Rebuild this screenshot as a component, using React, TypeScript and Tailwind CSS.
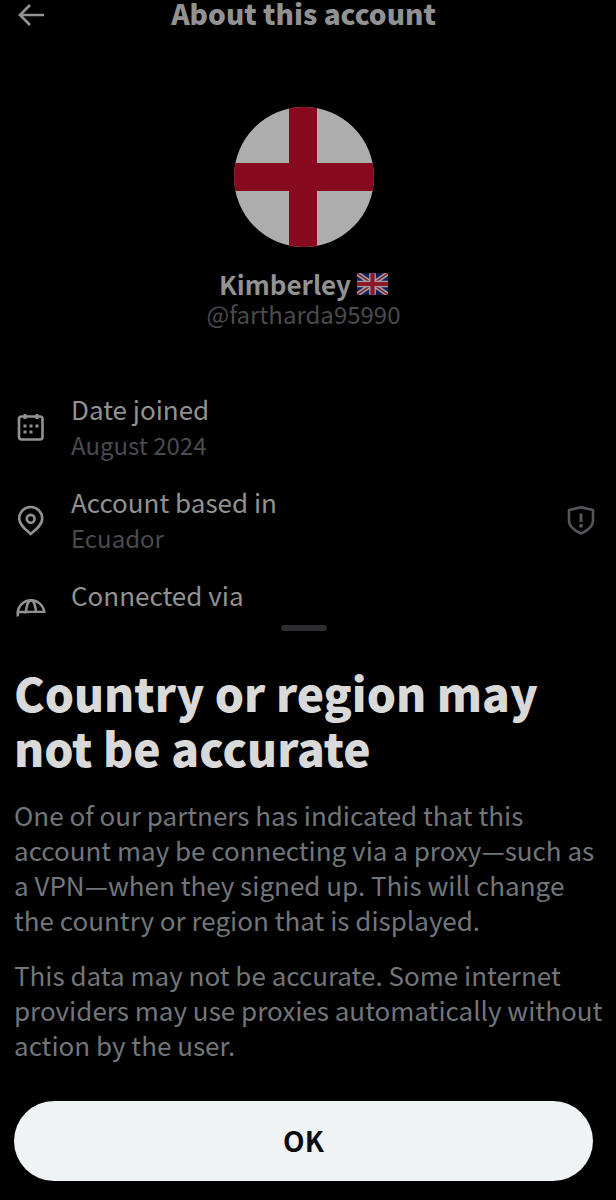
import type { ReactNode } from "react";

type InfoRowProps = {
  icon: ReactNode;
  label: string;
  value?: string;
  action?: ReactNode;
};

function BackIcon() {
  return (
    <svg viewBox="0 0 28 24" className="h-6 w-7" fill="none" stroke="currentColor" strokeWidth="2.7">
      <path d="M13 2 3 12l10 10M3 12h24" />
    </svg>
  );
}

function CalendarIcon() {
  return (
    <svg viewBox="0 0 32 32" className="size-8" fill="none" stroke="currentColor" strokeWidth="2.6">
      <rect x="4" y="5.5" width="23.5" height="23" rx="2.5" />
      <path d="M10 3v5M22 3v5" strokeWidth="3" />
      <path d="M8.5 15h3M14.5 15h3M20.5 15h3M8.5 21h3M14.5 21h3" strokeWidth="3" />
    </svg>
  );
}

function PinIcon() {
  return (
    <svg viewBox="0 0 32 32" className="size-8" fill="none" stroke="currentColor" strokeWidth="2.6">
      <path d="M15.700 30C11 26 4.200 21 4.200 14.500a11.500 11.500 0 0 1 23 0C27.200 21 20.500 26 15.700 30z" />
      <circle cx="15.700" cy="14.800" r="3.900" />
    </svg>
  );
}

function GlobeIcon() {
  return (
    <svg viewBox="0 0 32 32" className="size-8" fill="none" stroke="currentColor" strokeWidth="2.6">
      <circle cx="16" cy="16.500" r="13.300" />
      <ellipse cx="16" cy="16.500" rx="5" ry="13.300" />
      <path d="M3 15h26" />
    </svg>
  );
}

function ShieldIcon() {
  return (
    <svg viewBox="0 0 32 32" className="size-8" fill="none" stroke="currentColor" strokeWidth="2.6">
      <path d="M16 3.200 28 6v11c0 6-5.500 9.500-12 12.500C9.500 26.500 4 23 4 17V6z" strokeLinejoin="round" />
      <path d="M16 9.500v8.500" strokeWidth="3" />
      <circle cx="16" cy="21.800" r="2" fill="currentColor" stroke="none" />
    </svg>
  );
}

function UnionJack() {
  return (
    <svg viewBox="0 0 60 42" className="h-[22px] w-[31px]" role="img" aria-label="United Kingdom">
      <path fill="#101e55" d="M0 0h60v42H0z" />
      <path d="m0 0 60 42M60 0 0 42" stroke="#a0a0a5" strokeWidth="9" />
      <path d="m0 0 60 42M60 0 0 42" stroke="#8d1629" strokeWidth="3" />
      <path d="M30 0v42M0 21h60" stroke="#a0a0a5" strokeWidth="13" />
      <path d="M30 0v42M0 21h60" stroke="#8d1629" strokeWidth="8" />
    </svg>
  );
}

function Avatar() {
  return (
    <svg viewBox="0 0 140 140" className="size-[140px] rounded-full" role="img" aria-label="Profile picture">
      <path fill="#adadad" d="M0 0h140v140H0z" />
      <path d="M69 0v140M0 70h140" stroke="#870a1e" strokeWidth="28" />
    </svg>
  );
}

function InfoRow({ icon, label, value, action }: InfoRowProps) {
  return (
    <li className="flex min-h-[72px] items-center">
      <span className="mr-6 shrink-0 text-[#929292]">{icon}</span>
      <div className="flex-1 self-start">
        <p className="text-[26px] leading-9 text-[#929292]">{label}</p>
        {value && <p className="text-2xl leading-9 text-[#494b4f]">{value}</p>}
      </div>
      {action}
    </li>
  );
}

export default function App() {
  return (
    <div className="flex min-h-screen flex-col bg-black font-['Noto_Sans_CJK_SC',sans-serif]">
      <main className="pr-[9px]">
        <header className="grid h-[30px] grid-cols-[62px_1fr_62px] items-start">
          <button aria-label="Back" className="flex h-[30px] items-center justify-self-center text-[#929292]">
            <BackIcon />
          </button>
          <h1 className="text-center text-[28px] leading-[26px] font-black text-[#929292]">About this account</h1>
        </header>

        <section className="mt-[77px] flex flex-col items-center">
          <Avatar />
          <div className="mt-[22px] flex items-baseline gap-1.5 text-[26px] leading-[30px] font-bold text-[#929292]">
            <h2>Kimberley</h2>
            <UnionJack />
          </div>
          <p className="text-2xl leading-[30px] text-[#494b4f]">@fartharda95990</p>
        </section>

        <ul className="mt-[62px] flex flex-col gap-[21px] pr-2.5 pl-[15px]">
          <InfoRow icon={<CalendarIcon />} label="Date joined" value="August 2024" />
          <InfoRow
            icon={<PinIcon />}
            label="Account based in"
            value="Ecuador"
            action={
              <button aria-label="Location notice" className="text-[#55575b]">
                <ShieldIcon />
              </button>
            }
          />
          <InfoRow icon={<GlobeIcon />} label="Connected via" />
        </ul>
      </main>

      {/* Sheet slides over the last row of the list */}
      <div
        role="dialog"
        aria-labelledby="sheet-title"
        className="relative -mt-9 flex flex-1 flex-col rounded-t-[32px] bg-black pt-3 pr-[9px] pb-[19px] pl-3.5"
      >
        <div className="mr-3.5 h-1.5 w-[46px] self-center rounded-full bg-[#2c2d2f]" />
        <h2 id="sheet-title" className="mt-[34px] text-[46px] leading-[55px] font-black text-[#d9d9d9]">
          Country or region may not be accurate
        </h2>
        <div className="mt-[22px] flex flex-col gap-5 text-[26px] leading-[35px] text-[#71767b]">
          <p>
            One of our partners has indicated that this account may be connecting via a proxy—such as a VPN—when they
            signed up. This will change the country or region that is displayed.
          </p>
          <p>
            This data may not be accurate. Some internet providers may use proxies automatically without action by the
            user.
          </p>
        </div>
        <button className="mt-auto mr-3.5 h-20 rounded-full bg-[#eff3f4] pb-0.5 text-[28px] font-bold text-[#0a0c0f]">
          OK
        </button>
      </div>
    </div>
  );
}
